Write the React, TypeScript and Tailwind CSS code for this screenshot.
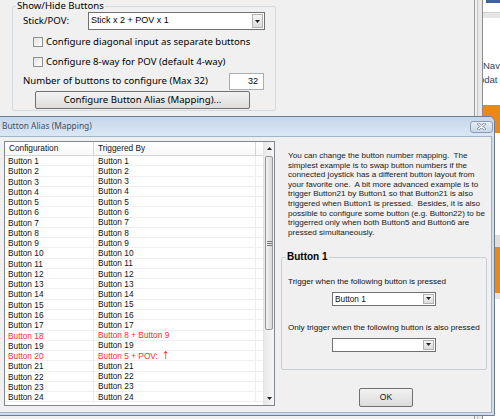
import React from 'react'

type Row = { name: string; trig: React.ReactNode; red?: boolean }

const ROWS: Row[] = Array.from({ length: 24 }, (_, i) => {
  const n = i + 1
  if (n === 18) return { name: 'Button 18', trig: 'Button 8 + Button 9', red: true }
  if (n === 20)
    return {
      name: 'Button 20',
      trig: (
        <>
          Button 5 + POV:{' '}
          <span className="ml-[3px] font-['DejaVu_Sans',sans-serif] text-[11px] leading-[10px] scale-x-75 inline-block">
            {'\u2191'}
          </span>
        </>
      ),
      red: true,
    }
  return { name: `Button ${n}`, trig: `Button ${n}` }
})

const HELP = [
  'You can change the button number mapping.  The',
  'simplest example is to swap button numbers if the',
  'connected joystick has a different button layout from',
  'your favorite one.  A bit more advanced example is to',
  'trigger Button21 by Button1 so that Button21 is also',
  'triggered when Button1 is pressed.  Besides, it is also',
  'possible to configure some button (e.g. Button22) to be',
  'triggerred only when both Button5 and Button6 are',
  'pressed simultaneously.',
].join('\n')

function Tri({ up = false }: { up?: boolean }) {
  return (
    <svg width="5" height="3" viewBox="0 0 5 3">
      <path d={up ? 'M0 3h5L2.5 0z' : 'M0 0h5L2.5 3z'} fill="#222" />
    </svg>
  )
}

function Combo({ value, className }: { value?: string; className: string }) {
  return (
    <div className={`flex items-stretch border border-[#707070] bg-white ${className}`}>
      <div className="flex-1 flex items-center pl-[2px] whitespace-nowrap">{value}</div>
      <div className="w-[11px] m-[1px] flex items-center justify-center border border-[#b1b1b1] bg-gradient-to-b from-[#f5f5f5] to-[#dcdcdc]">
        <Tri />
      </div>
    </div>
  )
}

function Check({ label }: { label: string }) {
  return (
    <div className="h-[12px] ml-[10px] flex items-center">
      <div className="w-[10px] h-[10px] border border-[#8e8f8f] bg-gradient-to-br from-[#e2e2e2] to-white" />
      <span className="ml-[3px] whitespace-nowrap">{label}</span>
    </div>
  )
}

function BackWindow() {
  return (
    <div className="flex-1 flex flex-col bg-white overflow-hidden text-[9.5px] leading-[10px] font-['Liberation_Sans',sans-serif] text-[#34435e]">
      <div className="h-[3px] flex">
        <div className="w-[3px]" />
        <div className="flex-1 bg-[#3d62a0]" />
      </div>
      <div className="h-[9px]" />
      <div className="h-[6px] bg-[#e6e6e6] border-t border-[#d2d2d2]" />
      <div className="h-[43px]" />
      <div className="whitespace-nowrap">Nav</div>
      <div className="mt-[4px] -ml-[4px] whitespace-nowrap">pdat</div>
      <div className="h-[20px]" />
      <div className="h-[28px] bg-[#e8891c]" />
      <div className="h-[102px]" />
      <div className="h-[12px] bg-[#dedede]" />
      <div className="h-[46px] bg-[#e8891c]" />
      <div className="h-[6px] bg-[#e4e4e4]" />
      <div className="flex-1" />
    </div>
  )
}

function AliasDialog() {
  return (
    <div className="absolute left-[-8px] top-[116px] w-[503px] h-[300px] flex flex-col border border-[#6b7c93] rounded-t-[6px] bg-[#cfdcec]">
      <div className="h-[19px] flex items-center justify-between pl-[9px] pr-[1px] rounded-t-[5px] bg-gradient-to-b from-[#c6d7eb] to-[#dbe7f4]">
        <span className="text-[8.4px] text-[#404e64] whitespace-nowrap">Button Alias (Mapping)</span>
        <div className="w-[23px] h-[12px] flex items-center justify-center rounded-[3px] border border-[#8e9db3] bg-gradient-to-b from-[#e6eef8] to-[#c9d7e8]">
          <svg width="9" height="7" viewBox="0 0 9 7">
            <path d="M1.5 1L7.5 6M7.5 1L1.5 6" stroke="#6f7f95" strokeWidth="2.6" strokeLinecap="round" />
            <path d="M1.5 1L7.5 6M7.5 1L1.5 6" stroke="#fff" strokeWidth="1.2" strokeLinecap="round" />
          </svg>
        </div>
      </div>

      <div className="flex-1 mx-[2px] mb-[2px] border border-[#a3b3c8] bg-[#f0f0f0] flex items-start font-['Liberation_Sans',sans-serif] text-[8.3px] text-[#111]">
        {/* list view */}
        <div className="ml-[8px] mt-[4px] w-[271px] h-[265px] border border-[#828790] bg-white flex">
          <div className="w-[258px] flex flex-col overflow-hidden">
            <div className="h-[14px] shrink-0 flex border-b border-[#d5d5d5] bg-gradient-to-b from-white to-[#f7f8fa] leading-[13px]">
              <div className="w-[89px] pl-[4px] border-r border-[#d5d5d5]">Configuration</div>
              <div className="w-[162px] pl-[4px] border-r border-[#d5d5d5]">Triggered By</div>
              <div className="flex-1" />
            </div>
            {ROWS.map((r) => (
              <div
                key={r.name}
                className={`h-[10.27px] shrink-0 flex border-b border-[#efefef] leading-[10px] whitespace-nowrap ${r.red ? 'text-[#ff2b2b]' : ''}`}
              >
                <div className="w-[89px] pl-[3px] border-r border-[#ededed]">{r.name}</div>
                <div className="w-[162px] pl-[4px] border-r border-[#ededed] flex items-center">{r.trig}</div>
                <div className="flex-1" />
              </div>
            ))}
          </div>
          <div className="w-[11px] flex flex-col border-l border-[#e4e4e4] bg-gradient-to-r from-[#e9e9e9] to-[#f6f6f6]">
            <div className="h-[13px] flex items-center justify-center">
              <Tri up />
            </div>
            <div className="mt-[1px] mx-[1px] h-[174px] flex items-center justify-center rounded-[2px] border border-[#979797] bg-gradient-to-r from-[#f3f3f3] to-[#d9d9d9]">
              <div className="flex flex-col gap-[1px]">
                <div className="w-[5px] h-px bg-[#7a7a7a]" />
                <div className="w-[5px] h-px bg-[#7a7a7a]" />
                <div className="w-[5px] h-px bg-[#7a7a7a]" />
              </div>
            </div>
            <div className="flex-1" />
            <div className="h-[13px] flex items-center justify-center">
              <Tri />
            </div>
          </div>
        </div>

        {/* right panel */}
        <div className="ml-[6px] w-[206px] flex flex-col">
          <p className="pl-[7px] pt-[14px] text-[8.1px] leading-[9.6px] whitespace-pre text-[#1a1a1a]">{HELP}</p>
          <fieldset className="mt-[14px] border border-[#c9cfd3] rounded-[2px] pb-[17px]">
            <legend className="ml-[4px] px-[1px] text-[10px] leading-[12px] font-bold text-black">Button 1</legend>
            <div className="pl-[6px] text-[8.1px]">
              <div className="mt-[14px] leading-[10px] whitespace-nowrap">Trigger when the following button is pressed</div>
              <Combo value="Button 1" className="mt-[4.6px] ml-[44px] w-[104px] h-[14px] text-[8.3px]" />
              <div className="mt-[17px] leading-[10px] whitespace-nowrap">Only trigger when the following button is also pressed</div>
              <Combo className="mt-[5px] ml-[44px] w-[104px] h-[14px]" />
            </div>
          </fieldset>
          <button className="mt-[18px] ml-[78px] w-[54px] h-[19px] flex items-center justify-center rounded-[2px] border border-[#707070] bg-gradient-to-b from-[#f2f2f2] to-[#dcdcdc] text-[8.5px]">
            OK
          </button>
        </div>
      </div>
    </div>
  )
}

export default function App() {
  return (
    <div className="relative w-[500px] h-[419px] overflow-hidden bg-[#f0f0f0] font-['Noto_Sans',sans-serif] text-black text-[9.6px]">
      <div className="flex h-full">
        <div className="w-[474px] shrink-0 pl-[12px]">
          <fieldset className="w-[264px] border border-[#d3d9dd] rounded-[2px] pb-[1px]">
            <legend className="ml-[3px] px-[1px] leading-[12px]">Show/Hide Buttons</legend>
            <div className="pl-[10px]">
              <div className="h-[18px] flex items-center">
                <span className="w-[65px]">Stick/POV:</span>
                <Combo
                  value="Stick x 2 + POV x 1"
                  className="w-[177px] h-[18px] font-['Liberation_Sans',sans-serif] text-[9px]"
                />
              </div>
              <div className="mt-[6px]">
                <Check label="Configure diagonal input as separate buttons" />
              </div>
              <div className="mt-[8px]">
                <Check label="Configure 8-way for POV (default 4-way)" />
              </div>
              <div className="mt-[5px] h-[17px] flex items-center">
                <span className="w-[206px] whitespace-nowrap">Number of buttons to configure (Max 32)</span>
                <div className="w-[35px] h-[17px] border border-[#abadb3] bg-white flex items-center justify-end pr-[5px] font-['Liberation_Sans',sans-serif] text-[9px]">
                  32
                </div>
              </div>
              <button className="mt-[1px] ml-[12px] w-[215px] h-[18px] flex items-center justify-center rounded-[2px] border border-[#707070] bg-gradient-to-b from-[#f2f2f2] to-[#dddddd]">
                Configure Button Alias (Mapping)...
              </button>
            </div>
          </fieldset>
        </div>
        <div className="w-px bg-[#9b9b9b]" />
        <div className="w-[2px] bg-[#f0f0f0]" />
        <div className="w-px bg-[#c4c4c4]" />
        <div className="w-[4px] bg-[#e9e9e9]" />
        <div className="w-px bg-[#8c8c8c]" />
        <BackWindow />
      </div>
      <AliasDialog />
    </div>
  )
}
